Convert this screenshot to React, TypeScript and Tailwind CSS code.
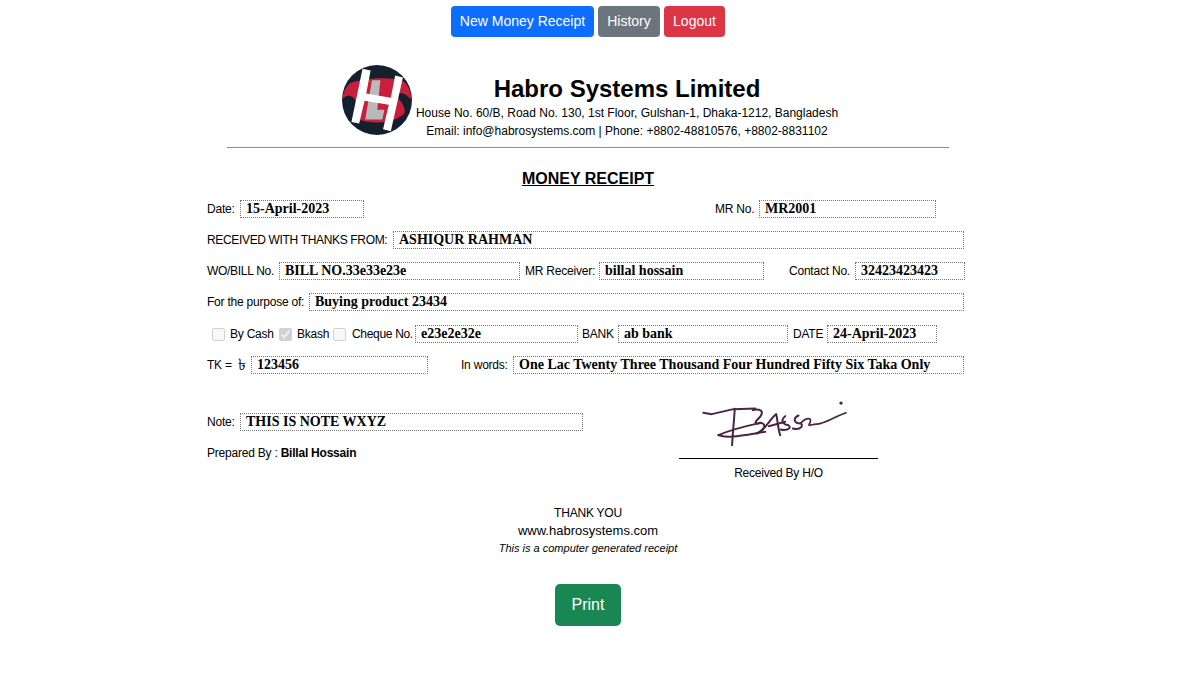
import React from "react";

const sans = "font-['Liberation_Sans',Arial,sans-serif]";

function Field({ w, children, size = "text-[14px]" }: { w: string; children?: React.ReactNode; size?: string }) {
  return (
    <span
      className={`${w} ${size} inline-block h-[18px] shrink-0 border border-dotted border-[#777] pl-[5px] font-['Liberation_Serif',serif] font-bold leading-[16px] tracking-normal text-black whitespace-nowrap`}
    >
      {children}
    </span>
  );
}

function Logo() {
  return (
    <svg width="70" height="70" viewBox="36 31 208 208" className="shrink-0">
      <circle cx="140" cy="135" r="104" fill="#14202e" />
      <path
        d="M60 85 C90 70 190 62 222 82 C240 100 243 125 240 132 C222 112 205 112 190 118 C205 130 225 150 222 175 C190 205 110 212 70 185 C80 165 84 140 70 128 C58 118 45 122 38 132 C38 112 48 95 60 85 Z"
        fill="#c8203c"
      />
      <path d="M125 76 L150 76 L141 164 L162 164 L156 193 L105 193 Z" fill="#b9b9bb" />
      <path d="M97 42 L121 47 L108 116 L181 128 L194 62 L217 68 L181 228 L158 222 L175 149 L103 137 L87 205 L64 200 Z" fill="#fff" />
    </svg>
  );
}

function Signature() {
  return (
    <svg width="147" height="47" viewBox="90 30 440 140" className="absolute left-[21px] top-0" fill="none" stroke="#4a2444" strokeLinecap="round" strokeLinejoin="round">
      <path strokeWidth="6" d="M100 68 L125 72 L190 57 L255 55" />
      <path strokeWidth="6" d="M194 56 C192 90 188 130 186 165" />
      <path strokeWidth="6" d="M145 135 C190 115 240 105 272 98" />
      <path strokeWidth="6" d="M145 135 C170 146 220 135 285 125" />
      <path strokeWidth="6" d="M248 60 C265 55 285 60 270 80 C258 92 250 100 262 100 C285 95 290 110 270 125 L260 130" />
      <path strokeWidth="6" d="M262 128 C285 120 300 85 318 72 C322 85 322 110 330 135" />
      <path strokeWidth="6" d="M296 108 L345 95" />
      <path strokeWidth="6" d="M345 78 C328 92 340 103 355 105 C368 115 345 122 332 118" />
      <path strokeWidth="6" d="M385 76 C366 85 372 100 392 100 C402 110 385 120 368 115" />
      <path strokeWidth="5" d="M392 98 C410 80 428 82 418 100 C410 112 430 100 440 102 C470 98 480 85 527 68" />
      <circle cx="512" cy="39" r="5" fill="#4a2444" stroke="none" />
    </svg>
  );
}

export default function App() {
  return (
    <div className={`${sans} w-[1176px] h-[698px] bg-white text-black text-[12px] tracking-[-0.22px] leading-[18px] whitespace-nowrap`}>
      <div className="flex justify-center gap-1 pt-[6px] text-white text-[14px] tracking-normal">
        <button className="h-[31px] w-[143px] rounded bg-[#0d6efd] pb-px">New Money Receipt</button>
        <button className="h-[31px] w-[62px] rounded bg-[#6c757d] pb-px">History</button>
        <button className="h-[31px] w-[61px] rounded bg-[#dc3545] pb-px">Logout</button>
      </div>

      <div className="mx-auto w-[762px]">
        <div className="mt-[28px] ml-[135px] flex items-start text-[12px] tracking-normal">
          <Logo />
          <div className="ml-1 flex w-[422px] flex-col items-center">
            <div className="mt-[9px] h-[30px] text-[24px] font-bold leading-[30px]">Habro Systems Limited</div>
            <div className="h-[18px] leading-[18px]">House No. 60/B, Road No. 130, 1st Floor, Gulshan-1, Dhaka-1212, Bangladesh</div>
            <div className="h-[18px] leading-[18px]">Email: info@habrosystems.com | Phone: +8802-48810576, +8802-8831102</div>
          </div>
        </div>
        <div className="ml-[20px] mt-[7px] h-px w-[722px] bg-[#8c8c8c]" />
        <div className="mt-[21px] text-center text-[16px] font-bold leading-[20px] tracking-normal underline">MONEY RECEIPT</div>

        <div className="mt-[11px] flex h-[18px] items-center">
          <span className="w-[27px]">Date:</span>
          <span className="ml-[6px]"><Field w="w-[124px]">15-April-2023</Field></span>
          <span className="ml-[351px] w-[39px]">MR No.</span>
          <span className="ml-[5px]"><Field w="w-[177px]">MR2001</Field></span>
        </div>

        <div className="mt-[13px] flex h-[18px] items-center">
          <span className="w-[181px] tracking-[-0.34px]">RECEIVED WITH THANKS FROM:</span>
          <span className="ml-[5px]"><Field w="w-[571px]">ASHIQUR RAHMAN</Field></span>
        </div>

        <div className="mt-[13px] flex h-[18px] items-center">
          <span className="w-[67px] tracking-[-0.3px]">WO/BILL No.</span>
          <span className="ml-[5px]"><Field w="w-[241px]">BILL NO.33e33e23e</Field></span>
          <span className="ml-[5px] w-[69px]">MR Receiver:</span>
          <span className="ml-[5px]"><Field w="w-[165px]">billal hossain</Field></span>
          <span className="ml-[25px] w-[61px]">Contact No.</span>
          <span className="ml-[5px]"><Field w="w-[110px]">32423423423</Field></span>
        </div>

        <div className="mt-[13px] flex h-[18px] items-center">
          <span className="w-[97px]">For the purpose of:</span>
          <span className="ml-[5px]"><Field w="w-[655px]">Buying product 23434</Field></span>
        </div>

        <div className="mt-[14px] flex h-[18px] items-center">
          <input type="checkbox" disabled className="ml-[5px] h-[13px] w-[13px] shrink-0" />
          <span className="ml-[5px] w-[44px]">By Cash</span>
          <input type="checkbox" disabled defaultChecked className="ml-[5px] h-[13px] w-[13px] shrink-0" />
          <span className="ml-[5px] w-[33px]">Bkash</span>
          <input type="checkbox" disabled className="ml-[3px] h-[13px] w-[13px] shrink-0" />
          <span className="ml-[6px] w-[61px] tracking-[-0.32px]">Cheque No.</span>
          <span className="ml-[2px]"><Field w="w-[163px]">e23e2e32e</Field></span>
          <span className="ml-[4px] w-[32px]">BANK</span>
          <span className="ml-[4px]"><Field w="w-[170px]">ab bank</Field></span>
          <span className="ml-[5px] w-[29px]">DATE</span>
          <span className="ml-[5px]"><Field w="w-[110px]">24-April-2023</Field></span>
        </div>

        <div className="mt-[13px] flex h-[18px] items-center">
          <span className="w-[26px]">TK =</span>
          <span className="ml-[5px] w-[13px] text-[16px] tracking-normal">৳</span>
          <span className="ml-0"><Field w="w-[177px]">123456</Field></span>
          <span className="ml-[33px] w-[47px]">In words:</span>
          <span className="ml-[5px]"><Field w="w-[451px]">One Lac Twenty Three Thousand Four Hundred Fifty Six Taka Only</Field></span>
        </div>

        <div className="flex">
          <div className="w-[472px]">
            <div className="mt-[39px] flex h-[18px] items-center">
              <span className="w-[28px]">Note:</span>
              <span className="ml-[5px]"><Field w="w-[343px]">THIS IS NOTE WXYZ</Field></span>
            </div>
            <div className="mt-[13px]">
              Prepared By : <b>Billal Hossain</b>
            </div>
          </div>
          <div className="relative mt-[26px] w-[199px]">
            <Signature />
            <div className="mt-[58px] h-px bg-black" />
            <div className="mt-[5px] text-center">Received By H/O</div>
          </div>
        </div>

        <div className="mt-[22px] text-center">THANK YOU</div>
        <div className="text-center text-[13px] leading-[18px] tracking-normal">www.habrosystems.com</div>
        <div className="h-[17px] text-center text-[11px] italic leading-[17px] tracking-normal">This is a computer generated receipt</div>
        <div className="mt-[27px] flex justify-center">
          <button className="h-[42px] w-[66px] rounded-[5px] bg-[#198754] text-[16px] tracking-normal text-white">Print</button>
        </div>
      </div>
    </div>
  );
}
